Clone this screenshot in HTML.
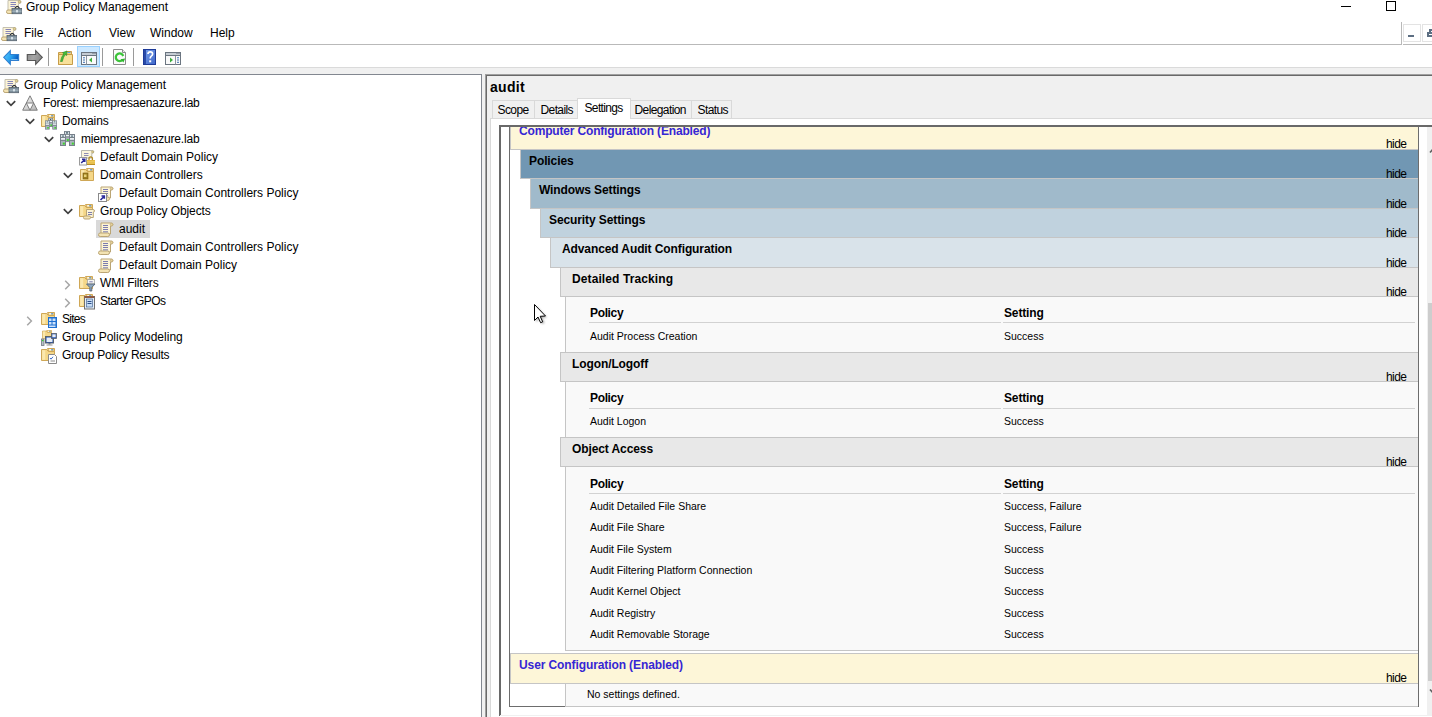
<!DOCTYPE html>
<html><head><meta charset="utf-8">
<style>
*{box-sizing:border-box}
html,body{margin:0;padding:0}
body{width:1432px;height:717px;overflow:hidden;position:relative;background:#fff;font-family:"Liberation Sans",sans-serif;color:#000}
.a{position:absolute}
.t12{position:absolute;font-size:12px;line-height:18px;white-space:nowrap}
.rb{position:absolute;font-size:12px;font-weight:bold;line-height:18px;white-space:nowrap;letter-spacing:-0.1px}
.rn{position:absolute;font-size:10.5px;line-height:14px;white-space:nowrap}
.hide{position:absolute;left:1386px;font-size:12px;line-height:14px;letter-spacing:-0.6px}
svg{position:absolute;overflow:visible}
</style></head><body>

<!-- title bar -->
<div class="t12" style="left:26px;top:-2px">Group Policy Management</div>
<div class="a" style="left:1341px;top:6px;width:10px;height:1px;background:#000"></div>
<div class="a" style="left:1386px;top:1px;width:10px;height:10px;border:1px solid #000"></div>

<!-- menu bar -->
<div class="t12" style="left:24px;top:24px">File</div>
<div class="t12" style="left:58px;top:24px">Action</div>
<div class="t12" style="left:109px;top:24px">View</div>
<div class="t12" style="left:150px;top:24px">Window</div>
<div class="t12" style="left:210px;top:24px">Help</div>
<div class="a" style="left:0;top:44px;width:1401px;height:1px;background:#b9b9b9"></div>
<div class="a" style="left:1401px;top:22px;width:1px;height:23px;background:#b9b9b9"></div>
<div class="a" style="left:1403px;top:44px;width:29px;height:1px;background:#b9b9b9"></div>
<div class="a" style="left:1403px;top:24px;width:18px;height:18px;border:1px solid #e3e3e3"></div>
<div class="a" style="left:1408px;top:35px;width:6px;height:2px;background:#5c6e82"></div>
<div class="a" style="left:1422px;top:24px;width:18px;height:18px;border:1px solid #e3e3e3"></div>
<div class="a" style="left:1429px;top:29px;width:8px;height:4px;border-top:2px solid #5c6e82;border-left:2px solid #5c6e82"></div>
<div class="a" style="left:1427px;top:32px;width:9px;height:5px;border:2px solid #5c6e82;background:#fff"></div>

<!-- toolbar -->
<div class="a" style="left:48px;top:48px;width:1px;height:18px;background:#9a9a9a"></div>
<div class="a" style="left:77px;top:46px;width:23px;height:21px;background:#cce8ff;border:1px solid #99d1ff"></div>
<div class="a" style="left:102px;top:48px;width:1px;height:18px;background:#9a9a9a"></div>
<div class="a" style="left:133px;top:48px;width:1px;height:18px;background:#9a9a9a"></div>

<!-- band under toolbar -->
<div class="a" style="left:0;top:67px;width:1432px;height:1px;background:#dadada"></div>
<div class="a" style="left:0;top:68px;width:1432px;height:6px;background:#f0f0f0"></div>

<!-- left pane -->
<div class="a" style="left:0;top:74px;width:482px;height:660px;border:1px solid #828790;border-left:none;background:#fff"></div>
<div class="a" style="left:482px;top:74px;width:3px;height:643px;background:#f0f0f0"></div>

<!-- right pane -->
<div class="a" style="left:485px;top:74px;width:960px;height:660px;background:#f0f0f0;border-top:1px solid #a0a0a0;border-left:1px solid #a0a0a0"></div>
<div class="a" style="left:486px;top:75px;width:960px;height:660px;border-top:1px solid #696969;border-left:1px solid #696969"></div>

<!-- tree -->
<div class="a" style="left:96px;top:220px;width:54px;height:18px;background:#d9d9d9"></div>
<div class="t12" style="left:24px;top:76px">Group Policy Management</div>
<div class="t12" style="left:43px;top:94px;letter-spacing:-0.22px">Forest: miempresaenazure.lab</div>
<div class="t12" style="left:62px;top:112px;letter-spacing:-0.1px">Domains</div>
<div class="t12" style="left:81px;top:130px;letter-spacing:-0.18px">miempresaenazure.lab</div>
<div class="t12" style="left:100px;top:148px">Default Domain Policy</div>
<div class="t12" style="left:100px;top:166px">Domain Controllers</div>
<div class="t12" style="left:119px;top:184px">Default Domain Controllers Policy</div>
<div class="t12" style="left:100px;top:202px;letter-spacing:-0.1px">Group Policy Objects</div>
<div class="t12" style="left:119px;top:220px">audit</div>
<div class="t12" style="left:119px;top:238px">Default Domain Controllers Policy</div>
<div class="t12" style="left:119px;top:256px">Default Domain Policy</div>
<div class="t12" style="left:100px;top:274px;letter-spacing:-0.2px">WMI Filters</div>
<div class="t12" style="left:100px;top:292px;letter-spacing:-0.55px">Starter GPOs</div>
<div class="t12" style="left:62px;top:310px;letter-spacing:-0.75px">Sites</div>
<div class="t12" style="left:62px;top:328px">Group Policy Modeling</div>
<div class="t12" style="left:62px;top:346px;letter-spacing:-0.24px">Group Policy Results</div>
<!-- right pane content -->
<div class="a" style="left:490px;top:78px;font-size:14px;font-weight:bold;line-height:18px;letter-spacing:0.3px">audit</div>
<div class="a" style="left:492px;top:100px;width:43px;height:19px;background:#f0f0f0;border:1px solid #d9d9d9;border-bottom:none"></div>
<div class="a" style="left:534px;top:100px;width:44px;height:19px;background:#f0f0f0;border:1px solid #d9d9d9;border-bottom:none"></div>
<div class="a" style="left:630px;top:100px;width:62px;height:19px;background:#f0f0f0;border:1px solid #d9d9d9;border-bottom:none"></div>
<div class="a" style="left:691px;top:100px;width:41px;height:19px;background:#f0f0f0;border:1px solid #d9d9d9;border-bottom:none"></div>
<div class="a" style="left:490px;top:118px;width:950px;height:600px;background:#fff;border:1px solid #d9d9d9"></div>
<div class="a" style="left:577px;top:98px;width:54px;height:21px;background:#fff;border:1px solid #d9d9d9;border-bottom:none"></div>
<div class="a" style="left:497.5px;top:101px;font-size:12px;line-height:18px;letter-spacing:-0.6px">Scope</div>
<div class="a" style="left:540.5px;top:101px;font-size:12px;line-height:18px;letter-spacing:-0.6px">Details</div>
<div class="a" style="left:634.5px;top:101px;font-size:12px;line-height:18px;letter-spacing:-0.6px">Delegation</div>
<div class="a" style="left:697.5px;top:101px;font-size:12px;line-height:18px;letter-spacing:-0.6px">Status</div>
<div class="a" style="left:584.5px;top:99px;font-size:12px;line-height:18px;letter-spacing:-0.65px">Settings</div>
<div class="a" style="left:499px;top:125px;width:940px;height:591px;border-left:2px solid #696969;border-top:2px solid #696969;background:#fff"></div>
<div class="a" style="left:500px;top:715px;width:940px;height:1px;background:#f0f0f0"></div>
<div class="a" style="left:509px;top:127px;width:1px;height:580px;background:#6d6d6d"></div>
<div class="a" style="left:509px;top:706px;width:57px;height:1px;background:#6d6d6d"></div>
<div class="a" style="left:1418px;top:127px;width:1px;height:580px;background:#6d6d6d"></div>
<div class="a" style="left:1427px;top:127px;width:5px;height:588px;background:#f0f0f0"></div>
<svg style="left:1429px;top:147px" width="8" height="7" viewBox="0 0 8 7"><path d="M1,5.5 L4,2 L7,5.5" stroke="#606060" stroke-width="1.6" fill="none"/></svg>
<svg style="left:1429px;top:688px" width="8" height="7" viewBox="0 0 8 7"><path d="M1,1.5 L4,5 L7,1.5" stroke="#606060" stroke-width="1.6" fill="none"/></svg>
<div class="a" style="left:1428px;top:303px;width:4px;height:378px;background:#cdcdcd"></div>
<div class="a" style="left:565px;top:297px;width:853px;height:55px;background:#f9f9f9;border-left:1px solid #c5c5c5"></div>
<div class="rb" style="left:590px;top:304px;letter-spacing:-0.35px">Policy</div>
<div class="rb" style="left:1004px;top:304px;letter-spacing:-0.15px">Setting</div>
<div class="a" style="left:589px;top:322px;width:412px;height:1px;background:#d2d2d2"></div>
<div class="a" style="left:1003px;top:322px;width:412px;height:1px;background:#d2d2d2"></div>
<div class="rn" style="left:590px;top:329px">Audit Process Creation</div>
<div class="rn" style="left:1004px;top:329px">Success</div>
<div class="a" style="left:565px;top:382px;width:853px;height:55px;background:#f9f9f9;border-left:1px solid #c5c5c5"></div>
<div class="rb" style="left:590px;top:389px;letter-spacing:-0.35px">Policy</div>
<div class="rb" style="left:1004px;top:389px;letter-spacing:-0.15px">Setting</div>
<div class="a" style="left:589px;top:408px;width:412px;height:1px;background:#d2d2d2"></div>
<div class="a" style="left:1003px;top:408px;width:412px;height:1px;background:#d2d2d2"></div>
<div class="rn" style="left:590px;top:414px">Audit Logon</div>
<div class="rn" style="left:1004px;top:414px">Success</div>
<div class="a" style="left:565px;top:467px;width:853px;height:184px;background:#f9f9f9;border-left:1px solid #c5c5c5;border-bottom:1px solid #c5c5c5"></div>
<div class="rb" style="left:590px;top:475px;letter-spacing:-0.35px">Policy</div>
<div class="rb" style="left:1004px;top:475px;letter-spacing:-0.15px">Setting</div>
<div class="a" style="left:589px;top:493px;width:412px;height:1px;background:#d2d2d2"></div>
<div class="a" style="left:1003px;top:493px;width:412px;height:1px;background:#d2d2d2"></div>
<div class="rn" style="left:590px;top:499px">Audit Detailed File Share</div>
<div class="rn" style="left:1004px;top:499px">Success, Failure</div>
<div class="rn" style="left:590px;top:520px">Audit File Share</div>
<div class="rn" style="left:1004px;top:520px">Success, Failure</div>
<div class="rn" style="left:590px;top:542px">Audit File System</div>
<div class="rn" style="left:1004px;top:542px">Success</div>
<div class="rn" style="left:590px;top:563px">Audit Filtering Platform Connection</div>
<div class="rn" style="left:1004px;top:563px">Success</div>
<div class="rn" style="left:590px;top:584px">Audit Kernel Object</div>
<div class="rn" style="left:1004px;top:584px">Success</div>
<div class="rn" style="left:590px;top:606px">Audit Registry</div>
<div class="rn" style="left:1004px;top:606px">Success</div>
<div class="rn" style="left:590px;top:627px">Audit Removable Storage</div>
<div class="rn" style="left:1004px;top:627px">Success</div>
<div class="a" style="left:565px;top:684px;width:853px;height:23px;background:#f9f9f9;border-left:1px solid #c5c5c5;border-bottom:1px solid #c5c5c5"></div>
<div class="rn" style="left:587px;top:687px">No settings defined.</div>
<div class="a" style="left:510px;top:119px;width:908px;height:31px;background:#fdf6d8;border:1px solid #c5c5c5;border-right:none"></div>
<div class="rb" style="left:519px;top:122px;color:#3626d4;letter-spacing:-0.17px">Computer Configuration (Enabled)</div>
<div class="hide" style="top:137px">hide</div>
<div class="a" style="left:520px;top:149px;width:898px;height:30px;background:#7197b3;border:1px solid #c5c5c5;border-right:none"></div>
<div class="rb" style="left:529px;top:152px">Policies</div>
<div class="hide" style="top:167px">hide</div>
<div class="a" style="left:530px;top:178px;width:888px;height:31px;background:#a0bacb;border:1px solid #c5c5c5;border-right:none"></div>
<div class="rb" style="left:539px;top:181px">Windows Settings</div>
<div class="hide" style="top:197px">hide</div>
<div class="a" style="left:540px;top:208px;width:878px;height:30px;background:#c0d2de;border:1px solid #c5c5c5;border-right:none"></div>
<div class="rb" style="left:549px;top:211px">Security Settings</div>
<div class="hide" style="top:226px">hide</div>
<div class="a" style="left:550px;top:237px;width:868px;height:31px;background:#d9e3ea;border:1px solid #c5c5c5;border-right:none"></div>
<div class="rb" style="left:562px;top:240px">Advanced Audit Configuration</div>
<div class="hide" style="top:256px">hide</div>
<div class="a" style="left:560px;top:267px;width:858px;height:30px;background:#e8e8e8;border:1px solid #c5c5c5;border-right:none"></div>
<div class="rb" style="left:572px;top:270px;letter-spacing:0.1px">Detailed Tracking</div>
<div class="hide" style="top:285px">hide</div>
<div class="a" style="left:560px;top:352px;width:858px;height:30px;background:#e8e8e8;border:1px solid #c5c5c5;border-right:none"></div>
<div class="rb" style="left:572px;top:355px">Logon/Logoff</div>
<div class="hide" style="top:370px">hide</div>
<div class="a" style="left:560px;top:437px;width:858px;height:30px;background:#e8e8e8;border:1px solid #c5c5c5;border-right:none"></div>
<div class="rb" style="left:572px;top:440px">Object Access</div>
<div class="hide" style="top:455px">hide</div>
<div class="a" style="left:510px;top:653px;width:908px;height:31px;background:#fdf6d8;border:1px solid #c5c5c5;border-right:none"></div>
<div class="rb" style="left:519px;top:656px;color:#3626d4">User Configuration (Enabled)</div>
<div class="hide" style="top:671px">hide</div>
<div class="a" style="left:499px;top:119px;width:940px;height:6px;background:#fff"></div>
<div class="a" style="left:499px;top:125px;width:940px;height:2px;background:#696969"></div>
<!-- ICONS -->
<svg width="0" height="0" style="position:absolute">
<defs>
<symbol id="scroll" viewBox="0 0 16 16">
<path d="M3,1 H13 Q15,1 15,2.5 Q15,4 13.3,4 H12.5 V12 H3 Z" fill="#fcf4d6" stroke="#bba574"/>
<circle cx="13.4" cy="2.5" r="1.2" fill="#e8d49a" stroke="#bba574" stroke-width="0.7"/>
<rect x="0.5" y="11" width="11" height="3.5" rx="1.7" fill="#f3e3b3" stroke="#bba574"/>
<path d="M5,3.5H10M5,5.5H10M5,7.5H10M5,9.8H10" stroke="#7c7cae"/>
</symbol>
<symbol id="gpm" viewBox="0 0 16 16">
<path d="M2,1.5 H13 Q15,1.5 15,3 Q15,4.5 13.2,4.5 H12.5 V12 H2 Z" fill="#fcf4d6" stroke="#c4c0b0"/>
<circle cx="13.5" cy="2.8" r="1.3" fill="#e2d296" stroke="#b0a070" stroke-width="0.7"/>
<path d="M4.5,3.5H10M4.5,5.5H10M4.5,7.5H9" stroke="#8484b8"/>
<rect x="0.5" y="11" width="7" height="3.5" rx="1.6" fill="#f3e3b3" stroke="#bba574"/>
<path d="M8.6,10 Q11.2,4.6 13.8,10" stroke="#2a2f36" stroke-width="1.3" fill="none"/>
<rect x="6" y="9.5" width="9.8" height="5.2" fill="#7d8f9b" stroke="#56636e" stroke-width="0.8"/>
<rect x="6.3" y="11.6" width="9.2" height="1.2" fill="#a2b2bc"/>
<rect x="10.2" y="11" width="1.6" height="2.4" fill="#e6eef4"/>
</symbol>
<symbol id="folder" viewBox="0 0 14 13">
<path d="M0.5,1.5 H5.8 L7,3.2 H13.5 V12.5 H0.5 Z" fill="#f5d788" stroke="#cfa756"/>
<path d="M6.5,0.5 H13.5 V3.5 H7.8 Z" fill="#f1cf7c" stroke="#cfa756"/>
<rect x="8.2" y="1.2" width="2" height="1.2" fill="#fff"/>
<rect x="10.2" y="1.2" width="2" height="1.2" fill="#4b92e2"/>
<rect x="1.2" y="2.2" width="3" height="9.6" fill="#fbe8ae"/>
</symbol>
<symbol id="link" viewBox="0 0 9 9">
<rect x="0.5" y="0.5" width="8" height="8" fill="#fff" stroke="#8a8a8a"/>
<path d="M2.5,7 L6,3.5 M3.5,3 H6.3 V5.8" stroke="#2a2a9a" stroke-width="1.6" fill="none"/>
</symbol>
<symbol id="server" viewBox="0 0 6 12" preserveAspectRatio="none">
<rect x="0.5" y="0.5" width="5" height="11" fill="#aab3bc" stroke="#77818b"/>
<rect x="1" y="1" width="4" height="2.2" fill="#e6eef2"/>
<ellipse cx="3" cy="2" rx="1.3" ry="0.6" fill="#1d3c4a"/>
<rect x="1" y="3.3" width="4" height="0.7" fill="#5d6770"/>
<rect x="1" y="4.1" width="4" height="1.7" fill="#f2f6f9"/>
<rect x="1" y="5.9" width="4" height="0.7" fill="#5d6770"/>
<rect x="2.8" y="8.6" width="2" height="2" fill="#3fd62c"/>
</symbol>
</defs>
</svg>

<!-- title/menu icons -->
<svg style="left:6px;top:-1px" width="16" height="16"><use href="#gpm"/></svg>
<svg style="left:1px;top:26px" width="16" height="16"><use href="#gpm"/></svg>

<!-- toolbar icons -->
<svg style="left:3px;top:50px" width="17" height="16" viewBox="0 0 17 16">
<defs><linearGradient id="gb" x1="0" y1="0" x2="1" y2="0.4"><stop offset="0" stop-color="#5ccbff"/><stop offset="0.55" stop-color="#2aa4f0"/><stop offset="1" stop-color="#0a5fc4"/></linearGradient></defs>
<path d="M0.7,7.3 L7.3,0.7 V4.5 H15.6 V10.5 H7.3 V14.3 Z" fill="url(#gb)" stroke="#2f7fd0" stroke-width="1.1"/>
<path d="M8.3,9.5 H14.6" stroke="#9fd4f6" stroke-width="0.8"/>
</svg>
<svg style="left:26px;top:50px" width="17" height="16" viewBox="0 0 17 16">
<defs><linearGradient id="gg" x1="0" y1="0" x2="1" y2="0.3"><stop offset="0" stop-color="#8a8a8a"/><stop offset="0.5" stop-color="#a6a6a6"/><stop offset="1" stop-color="#8c8c8c"/></linearGradient></defs>
<path d="M16.3,7.3 L9.7,0.7 V4.5 H1.3 V10.5 H9.7 V14.3 Z" fill="url(#gg)" stroke="#575757" stroke-width="1.2"/>
</svg>
<svg style="left:58px;top:50px" width="15" height="16" viewBox="0 0 15 16">
<path d="M0.5,2.5 H8 L9,1.5 H13.5 V14.5 H0.5 Z" fill="#f2d27c" stroke="#c69c48"/>
<path d="M9.5,2.5H12.5" stroke="#5aa0e0"/>
<path d="M0.5,4.5 H14.5 V14.5 H0.5 Z" fill="#f8e09a" stroke="#c69c48"/>
<path d="M2.5,11.5 Q3.2,6.5 5.8,4 L4.6,2.6 L9,1 L8.6,5.6 L7.3,4.6 Q5.2,7 4.3,11.5 Z" fill="#45bd3a" stroke="#2a8a28" stroke-width="0.6"/>
</svg>
<svg style="left:81px;top:52px" width="16" height="13" viewBox="0 0 16 13">
<rect x="0.5" y="0.5" width="15" height="12" fill="#fafafa" stroke="#6b7580"/>
<rect x="1" y="1" width="14" height="2" fill="#c5ccd3"/>
<path d="M0.5,3.5 H15.5" stroke="#6b7580"/>
<path d="M5.5,4 V12.5" stroke="#8b95a0"/>
<path d="M2,5.8H4M2,8H4M2,10.3H4" stroke="#3b6fb0" stroke-width="1"/>
<path d="M11,5.5 V10.5 L8,8 Z" fill="#3bb03b"/>
<path d="M11.5,1.5H12.5M13.5,1.5H14.5" stroke="#6b7580"/>
</svg>
<svg style="left:113px;top:49px" width="14" height="16" viewBox="0 0 14 16">
<path d="M0.5,0.5 H9.5 L12.5,3.5 V15.5 H0.5 Z" fill="#fbfbfb" stroke="#8c8c8c"/>
<path d="M9.5,0.5 V3.5 H12.5" fill="#eeeeee" stroke="#8c8c8c"/>
<path d="M9.6,10.6 A3.8,3.8 0 1 1 10.2,7" stroke="#3cc43a" stroke-width="2.3" fill="none"/>
<path d="M7.6,10.2 L12.2,9.4 L10.4,13.6 Z" fill="#2fb52f"/>
</svg>
<svg style="left:143px;top:49px" width="13" height="16" viewBox="0 0 13 16">
<defs><linearGradient id="hb" x1="0" y1="0" x2="1" y2="1"><stop offset="0" stop-color="#7aa2ec"/><stop offset="1" stop-color="#3c64c8"/></linearGradient></defs>
<rect x="0" y="0" width="13" height="16" fill="url(#hb)"/>
<rect x="0" y="0" width="3" height="16" fill="#2a4aa8"/>
<rect x="0.5" y="0.5" width="12" height="15" fill="none" stroke="#1d3a98"/>
<path d="M5,5 Q5,2.8 7.3,2.8 Q9.6,2.8 9.6,5 Q9.6,6.3 8.3,7.1 Q7.2,7.8 7.2,9.6" stroke="#fff" stroke-width="1.7" fill="none"/>
<rect x="6.2" y="11.3" width="2" height="2" fill="#fff"/>
</svg>
<svg style="left:165px;top:52px" width="16" height="13" viewBox="0 0 16 13">
<rect x="0.5" y="0.5" width="15" height="12" fill="#fafafa" stroke="#6b7580"/>
<rect x="1" y="1" width="14" height="2" fill="#c5ccd3"/>
<path d="M0.5,3.5 H15.5" stroke="#6b7580"/>
<path d="M10.5,4 V12.5" stroke="#8b95a0"/>
<path d="M12,5.8H14M12,8H14M12,10.3H14" stroke="#3b6fb0" stroke-width="1"/>
<path d="M5,5.5 V10.5 L8,8 Z" fill="#3bb03b"/>
<path d="M11.5,1.5H12.5M13.5,1.5H14.5" stroke="#6b7580"/>
</svg>

<!-- tree icons -->
<svg style="left:3px;top:78px" width="16" height="16" viewBox="0 0 16 16"><use href="#gpm" width="16" height="16"/></svg>
<svg style="left:6px;top:100px" width="10" height="7" viewBox="0 0 10 7"><path d="M0.8,1.2 L5,5.4 L9.2,1.2" stroke="#404040" stroke-width="1.7" fill="none"/></svg>
<svg style="left:22px;top:95px" width="16" height="16" viewBox="0 0 16 16"><defs><linearGradient id="fg" x1="0" y1="0" x2="1" y2="1"><stop offset="0" stop-color="#fbfbfb"/><stop offset="1" stop-color="#b4b4b4"/></linearGradient></defs><path d="M8,0.8 L15.3,15.2 H0.7 Z" fill="url(#fg)" stroke="#7e7e7e"/><path d="M4.3,8 H11.7 L8,15.2 Z" fill="#fcfcfc" stroke="#7e7e7e"/></svg>
<svg style="left:25px;top:118px" width="10" height="7" viewBox="0 0 10 7"><path d="M0.8,1.2 L5,5.4 L9.2,1.2" stroke="#404040" stroke-width="1.7" fill="none"/></svg>
<svg style="left:41px;top:114px" width="16" height="16" viewBox="0 0 16 16"><use href="#folder" x="0" y="0" width="14" height="13"/><use href="#server" x="7.2" y="4" width="4.8" height="9"/><use href="#server" x="4" y="6.3" width="4.8" height="9.4"/><use href="#server" x="11.2" y="6.3" width="4.8" height="9.4"/></svg>
<svg style="left:44px;top:136px" width="10" height="7" viewBox="0 0 10 7"><path d="M0.8,1.2 L5,5.4 L9.2,1.2" stroke="#404040" stroke-width="1.7" fill="none"/></svg>
<svg style="left:60px;top:130px" width="16" height="17" viewBox="0 0 16 17"><use href="#server" x="4" y="1" width="6" height="11.3"/><use href="#server" x="0" y="4" width="6" height="12"/><use href="#server" x="9" y="4" width="6" height="12"/></svg>
<svg style="left:79px;top:150px" width="16" height="16" viewBox="0 0 16 16"><path d="M2.5,0.5 H13.3 Q14.8,0.5 14.8,1.9 Q14.8,3.2 13.4,3.2 H12.8 V8 H2.5 Z" fill="#fcf6dc" stroke="#b8b8b0"/><circle cx="13.6" cy="1.9" r="1.1" fill="#d8c890" stroke="#a89860" stroke-width="0.5"/><path d="M5,3.5H9.5M5,5.5H9.5" stroke="#8080b0" stroke-width="0.9"/><rect x="0.5" y="7.5" width="7" height="7.5" fill="#fff" stroke="#9a9a9a"/><path d="M2.2,13 L5.2,10 M3,9.2 H5.8 V12" stroke="#2a2a98" stroke-width="1.5" fill="none"/><path d="M10,10 V8 Q11.7,5.6 13.4,8 V10" stroke="#b08a28" stroke-width="1.3" fill="none"/><rect x="8" y="10" width="8" height="5" fill="#e2b43a"/><path d="M8,11.3H16M8,13H16" stroke="#f4d878" stroke-width="0.7"/><rect x="8" y="14.2" width="8" height="0.8" fill="#b08420"/></svg>
<svg style="left:63px;top:172px" width="10" height="7" viewBox="0 0 10 7"><path d="M0.8,1.2 L5,5.4 L9.2,1.2" stroke="#404040" stroke-width="1.7" fill="none"/></svg>
<svg style="left:80px;top:168px" width="16" height="16" viewBox="0 0 16 16"><use href="#folder" x="0" y="0" width="14" height="13"/><rect x="3" y="5" width="5" height="6" fill="#a0801e" stroke="#7a5a10" stroke-width="0.6"/><rect x="4" y="6.5" width="2.5" height="2.5" fill="#e8d27a"/></svg>
<svg style="left:98px;top:186px" width="16" height="16" viewBox="0 0 16 16"><use href="#scroll" width="16" height="16"/><use href="#link" x="0" y="7" width="9" height="9"/></svg>
<svg style="left:63px;top:208px" width="10" height="7" viewBox="0 0 10 7"><path d="M0.8,1.2 L5,5.4 L9.2,1.2" stroke="#404040" stroke-width="1.7" fill="none"/></svg>
<svg style="left:79px;top:204px" width="16" height="16" viewBox="0 0 16 16"><use href="#folder" x="0" y="0" width="14" height="13"/><path d="M7.5,5.5 H14 Q15.5,5.5 15.5,7 Q15.5,8 14.3,8 V13.5 H7.5 Z" fill="#fcf4d6" stroke="#bba574"/><rect x="4.5" y="12" width="7" height="3" rx="1.4" fill="#f3e3b3" stroke="#bba574"/><path d="M9,8.5H13M9,10.5H13" stroke="#7c7cae"/></svg>
<svg style="left:98px;top:222px" width="16" height="16" viewBox="0 0 16 16"><use href="#scroll" width="16" height="16"/></svg>
<svg style="left:98px;top:240px" width="16" height="16" viewBox="0 0 16 16"><use href="#scroll" width="16" height="16"/></svg>
<svg style="left:98px;top:258px" width="16" height="16" viewBox="0 0 16 16"><use href="#scroll" width="16" height="16"/></svg>
<svg style="left:64px;top:280px" width="7" height="10" viewBox="0 0 7 10"><path d="M1.2,0.8 L5.4,5 L1.2,9.2" stroke="#a6a6a6" stroke-width="1.5" fill="none"/></svg>
<svg style="left:79px;top:276px" width="16" height="16" viewBox="0 0 16 16"><use href="#folder" x="0" y="0" width="14" height="13"/><path d="M8.5,3.5 H15.5 V8 H8.5 Z" fill="#f6f6f2" stroke="#a8a8a0" stroke-width="0.8"/><path d="M10.3,5.8H13.7" stroke="#7c7cae"/><path d="M7.5,8 H16 L12.8,11.5 V15 H10.8 V11.5 Z" fill="#8ea6bc" stroke="#4e5e6e" stroke-width="0.8"/></svg>
<svg style="left:64px;top:298px" width="7" height="10" viewBox="0 0 7 10"><path d="M1.2,0.8 L5.4,5 L1.2,9.2" stroke="#a6a6a6" stroke-width="1.5" fill="none"/></svg>
<svg style="left:79px;top:294px" width="16" height="16" viewBox="0 0 16 16"><use href="#folder" x="0" y="0" width="14" height="13"/><rect x="5.5" y="2.5" width="10" height="12.5" fill="#e4eef8" stroke="#707070"/><rect x="5.5" y="2" width="10" height="2" fill="#8c5a44"/><rect x="7.5" y="5" width="6" height="8" fill="#c6dcf4" stroke="#4a6a98" stroke-width="0.7"/><path d="M8.5,7.5H12.5M8.5,9.5H12.5" stroke="#2c4e88"/></svg>
<svg style="left:26px;top:316px" width="7" height="10" viewBox="0 0 7 10"><path d="M1.2,0.8 L5.4,5 L1.2,9.2" stroke="#a6a6a6" stroke-width="1.5" fill="none"/></svg>
<svg style="left:41px;top:312px" width="16" height="16" viewBox="0 0 16 16"><use href="#folder" x="0" y="0" width="14" height="13"/><rect x="7" y="5" width="9" height="11" fill="#1e6fd0"/><path d="M8,6.5H10.5V9H8Z M11.5,6.5H14.5V9H11.5Z M8,10H10.5V12.5H8Z M11.5,10H14.5V12.5H11.5Z M8,13.5H14.5V15H8Z" fill="#cfe3fa"/></svg>
<svg style="left:41px;top:330px" width="16" height="16" viewBox="0 0 16 16"><use href="#folder" x="1" y="0" width="10" height="9"/><rect x="0.5" y="9" width="2.5" height="6.5" fill="#b8c0c6" stroke="#707880" stroke-width="0.8"/><rect x="1" y="10" width="1.5" height="1.2" fill="#36d12f"/><rect x="4.5" y="6.5" width="8" height="6.5" fill="#1d4fb5" stroke="#5a6068"/><rect x="5.5" y="7.5" width="6" height="4.5" fill="#e8eef6"/><rect x="7.5" y="13" width="2" height="1.5" fill="#707880"/><rect x="5.5" y="14.5" width="6" height="1" fill="#909090"/><rect x="10.5" y="3.5" width="5" height="5" fill="#1d4fb5" stroke="#5a6068" stroke-width="0.8"/><rect x="11.3" y="4.3" width="3.4" height="3" fill="#e8eef6"/></svg>
<svg style="left:41px;top:348px" width="16" height="16" viewBox="0 0 16 16"><use href="#folder" x="0" y="0" width="14" height="13"/><path d="M7.5,6.5 H13.5 L15.5,8.5 V15.5 H7.5 Z" fill="#fff" stroke="#8a8a8a"/><path d="M9,10 L10,11.2 L12,8.8" stroke="#3a6ac8" stroke-width="1" fill="none"/><path d="M9.5,13H14" stroke="#8a8a8a"/></svg>
<!-- /tree icons -->
<svg style="left:534px;top:304px" width="16" height="22" viewBox="0 0 16 22"><defs><filter id="sh" x="-50%" y="-50%" width="200%" height="200%"><feGaussianBlur stdDeviation="1.2"/></filter></defs><path d="M2,2 L2,18 L5.5,14.5 L8,20 L10.5,19 L8,13.5 L13,13.5 Z" fill="#000" opacity="0.35" filter="url(#sh)"/><path d="M0.5,0.5 L0.5,16.5 L4,13 L6.6,18.7 L8.7,17.8 L6.2,12.3 L11.5,12 Z" fill="#fff" stroke="#000" stroke-width="1"/></svg>
</body></html>
